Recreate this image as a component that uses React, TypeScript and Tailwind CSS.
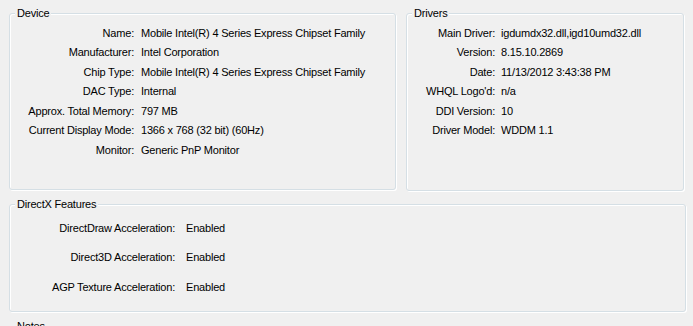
import type { ReactNode } from "react";

type Row = [string, string];

const device: Row[] = [
  ["Name:", "Mobile Intel(R) 4 Series Express Chipset Family"],
  ["Manufacturer:", "Intel Corporation"],
  ["Chip Type:", "Mobile Intel(R) 4 Series Express Chipset Family"],
  ["DAC Type:", "Internal"],
  ["Approx. Total Memory:", "797 MB"],
  ["Current Display Mode:", "1366 x 768 (32 bit) (60Hz)"],
  ["Monitor:", "Generic PnP Monitor"],
];

const drivers: Row[] = [
  ["Main Driver:", "igdumdx32.dll,igd10umd32.dll"],
  ["Version:", "8.15.10.2869"],
  ["Date:", "11/13/2012 3:43:38 PM"],
  ["WHQL Logo'd:", "n/a"],
  ["DDI Version:", "10"],
  ["Driver Model:", "WDDM 1.1"],
];

const features: Row[] = [
  ["DirectDraw Acceleration:", "Enabled"],
  ["Direct3D Acceleration:", "Enabled"],
  ["AGP Texture Acceleration:", "Enabled"],
];

function GroupBox({ title, className, children }: { title: string; className: string; children?: ReactNode }) {
  return (
    <div className="pt-[7px] shrink-0">
      <div
        className={`relative rounded-[3px] border border-[#d5dfe5] shadow-[1px_1px_0_#fff,inset_1px_1px_0_#fff] ${className}`}
      >
        <span className="absolute -top-[8px] left-[5px] bg-[#f0f0f0] px-[2px] leading-[14px]">{title}</span>
        {children}
      </div>
    </div>
  );
}

function Rows({ rows, labelW, gap, rowH }: { rows: Row[]; labelW: string; gap: string; rowH: string }) {
  return (
    <div className="flex flex-col">
      {rows.map(([k, v]) => (
        <div key={k} className={`flex items-center whitespace-nowrap ${rowH}`}>
          <span className={`shrink-0 text-right ${labelW}`}>{k}</span>
          <span className={gap}>{v}</span>
        </div>
      ))}
    </div>
  );
}

export default function App() {
  return (
    <div className="h-[326px] w-[693px] overflow-hidden bg-[#f0f0f0] pl-[9px] pt-[6px] font-['Liberation_Sans',Arial,sans-serif] text-[11px] tracking-[-0.2px] text-black">
      <div className="flex items-start gap-[10px]">
        <GroupBox title="Device" className="h-[177px] w-[387px] pt-[9px]">
          <Rows rows={device} labelW="w-[124px]" gap="pl-[7px]" rowH="h-[19.5px]" />
        </GroupBox>
        <GroupBox title="Drivers" className="h-[178px] w-[278px] pt-[9px]">
          <Rows rows={drivers} labelW="w-[88px]" gap="pl-[6px]" rowH="h-[19.5px]" />
        </GroupBox>
      </div>
      <div className="mt-[6px]">
        <GroupBox title="DirectX Features" className="h-[108px] w-[677px] pt-[8px]">
          <Rows rows={features} labelW="w-[165px]" gap="pl-[11px]" rowH="h-[29.5px]" />
        </GroupBox>
      </div>
      <div className="mt-[7px]">
        <GroupBox title="Notes" className="h-[100px] w-[677px]" />
      </div>
    </div>
  );
}
